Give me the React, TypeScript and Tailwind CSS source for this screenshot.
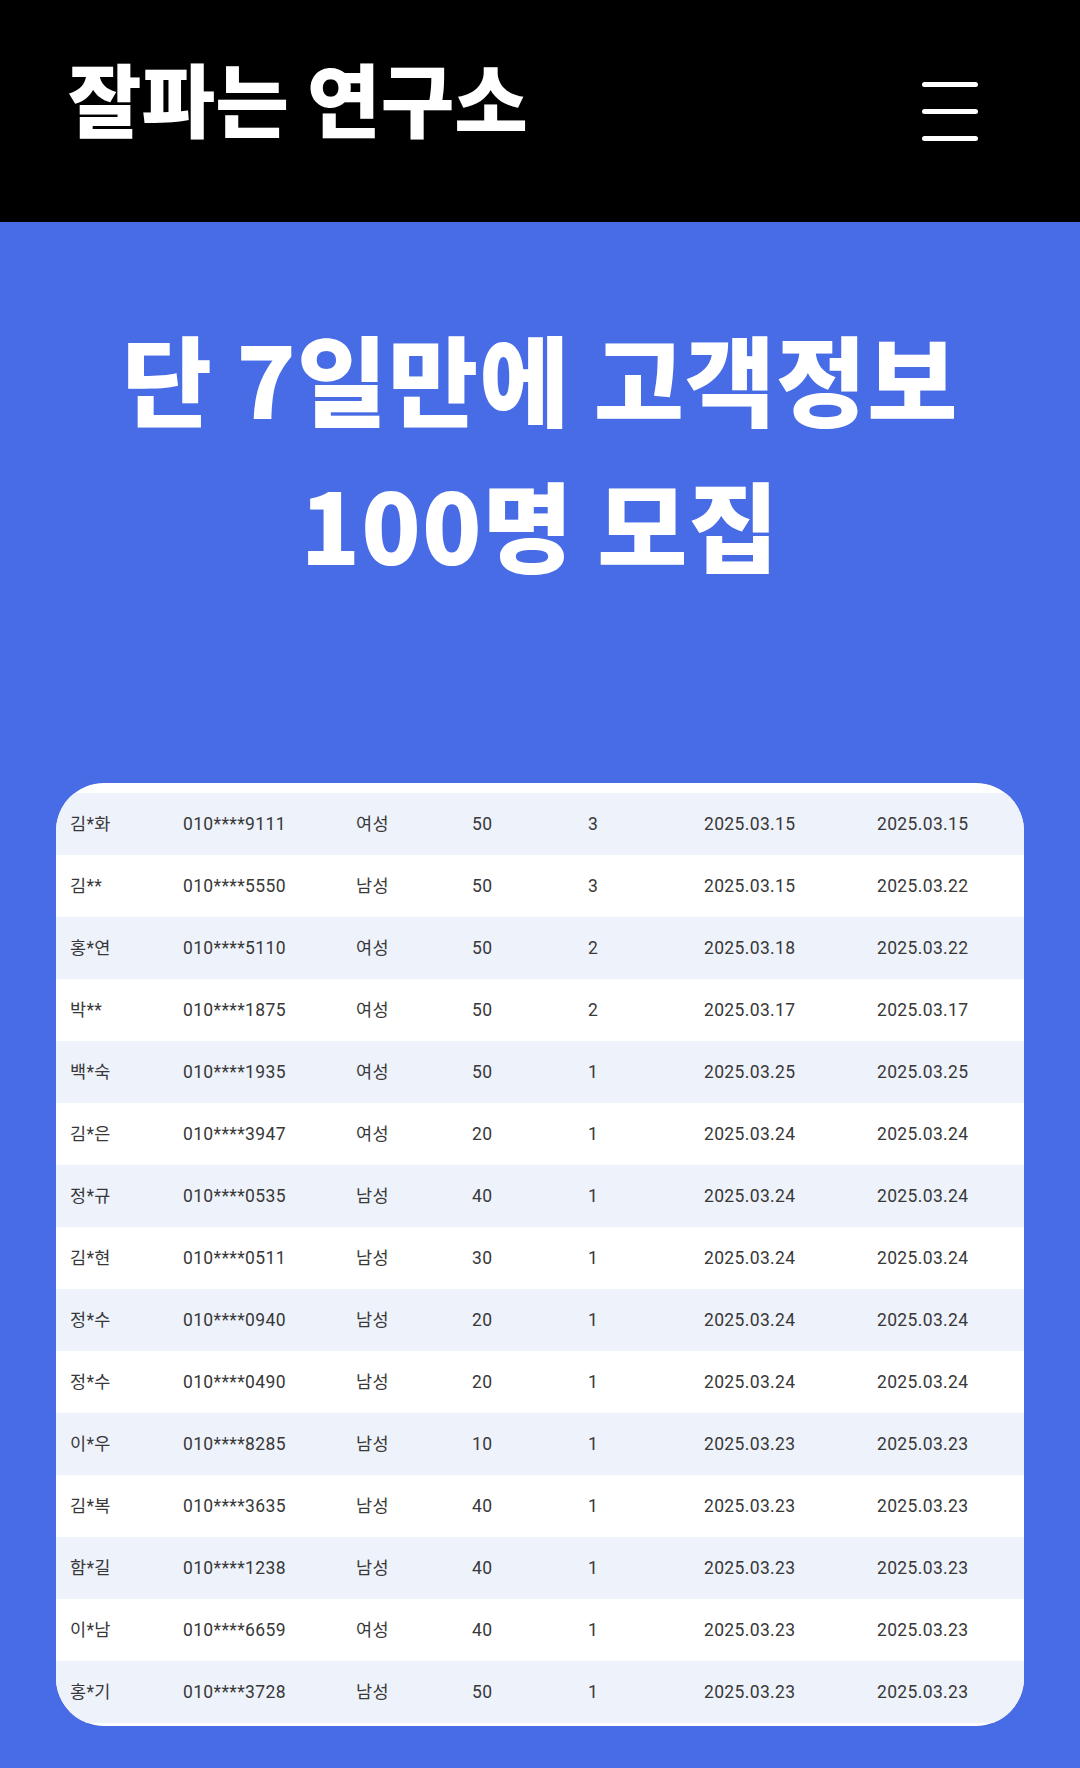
import React from "react";

type Row = {
    name: string;
    phone: string;
    gender: string;
    age: string;
    count: string;
    first: string;
    last: string;
};

const rows: Row[] = [
    { name: "김*화", phone: "010****9111", gender: "여성", age: "50", count: "3", first: "2025.03.15", last: "2025.03.15" },
    { name: "김**", phone: "010****5550", gender: "남성", age: "50", count: "3", first: "2025.03.15", last: "2025.03.22" },
    { name: "홍*연", phone: "010****5110", gender: "여성", age: "50", count: "2", first: "2025.03.18", last: "2025.03.22" },
    { name: "박**", phone: "010****1875", gender: "여성", age: "50", count: "2", first: "2025.03.17", last: "2025.03.17" },
    { name: "백*숙", phone: "010****1935", gender: "여성", age: "50", count: "1", first: "2025.03.25", last: "2025.03.25" },
    { name: "김*은", phone: "010****3947", gender: "여성", age: "20", count: "1", first: "2025.03.24", last: "2025.03.24" },
    { name: "정*규", phone: "010****0535", gender: "남성", age: "40", count: "1", first: "2025.03.24", last: "2025.03.24" },
    { name: "김*현", phone: "010****0511", gender: "남성", age: "30", count: "1", first: "2025.03.24", last: "2025.03.24" },
    { name: "정*수", phone: "010****0940", gender: "남성", age: "20", count: "1", first: "2025.03.24", last: "2025.03.24" },
    { name: "정*수", phone: "010****0490", gender: "남성", age: "20", count: "1", first: "2025.03.24", last: "2025.03.24" },
    { name: "이*우", phone: "010****8285", gender: "남성", age: "10", count: "1", first: "2025.03.23", last: "2025.03.23" },
    { name: "김*복", phone: "010****3635", gender: "남성", age: "40", count: "1", first: "2025.03.23", last: "2025.03.23" },
    { name: "함*길", phone: "010****1238", gender: "남성", age: "40", count: "1", first: "2025.03.23", last: "2025.03.23" },
    { name: "이*남", phone: "010****6659", gender: "여성", age: "40", count: "1", first: "2025.03.23", last: "2025.03.23" },
    { name: "홍*기", phone: "010****3728", gender: "남성", age: "50", count: "1", first: "2025.03.23", last: "2025.03.23" },
];

export default function App() {
    return (
        <div className="min-h-[1768px] w-[1080px] bg-[#486ce6] font-['Noto_Sans_CJK_KR',sans-serif]">
            {/* Header */}
            <header className="flex h-[222px] items-center justify-between bg-black pl-[68px] pr-[102px]">
                <h1 className="pb-[30px] text-[80px] font-black leading-none tracking-[0em] text-white">
                    잘파는 연구소
                </h1>
                <button type="button" className="flex flex-col gap-[22px]" aria-label="menu">
                    <span className="block h-[5px] w-[56px] rounded-full bg-white" />
                    <span className="block h-[5px] w-[56px] rounded-full bg-white" />
                    <span className="block h-[5px] w-[56px] rounded-full bg-white" />
                </button>
            </header>

            {/* Hero */}
            <section className="px-[56px] pt-[81px]">
                <h2 className="text-center text-[98px] font-black leading-[146px] tracking-[0.01em] text-white">
                    단 7일만에 고객정보
                    <br />
                    100명 모집
                </h2>

                {/* Table card */}
                <div className="mt-[188px] overflow-hidden rounded-[48px] bg-white pb-[3px] pt-[10px]">
                    {rows.map((r, i) => (
                        <div
                            key={i}
                            className={`grid h-[62px] grid-cols-[113px_173px_116px_116px_116px_173px_1fr] items-center pl-[14px] font-['Roboto','Noto_Sans_CJK_KR',sans-serif] text-[17.5px] tracking-[0.02em] text-[#383838] ${i % 2 === 0 ? "bg-[#eef2fb]" : "bg-white"}`}
                        >
                            <span>{r.name}</span>
                            <span>{r.phone}</span>
                            <span>{r.gender}</span>
                            <span>{r.age}</span>
                            <span>{r.count}</span>
                            <span>{r.first}</span>
                            <span>{r.last}</span>
                        </div>
                    ))}
                </div>
            </section>
        </div>
    );
}
